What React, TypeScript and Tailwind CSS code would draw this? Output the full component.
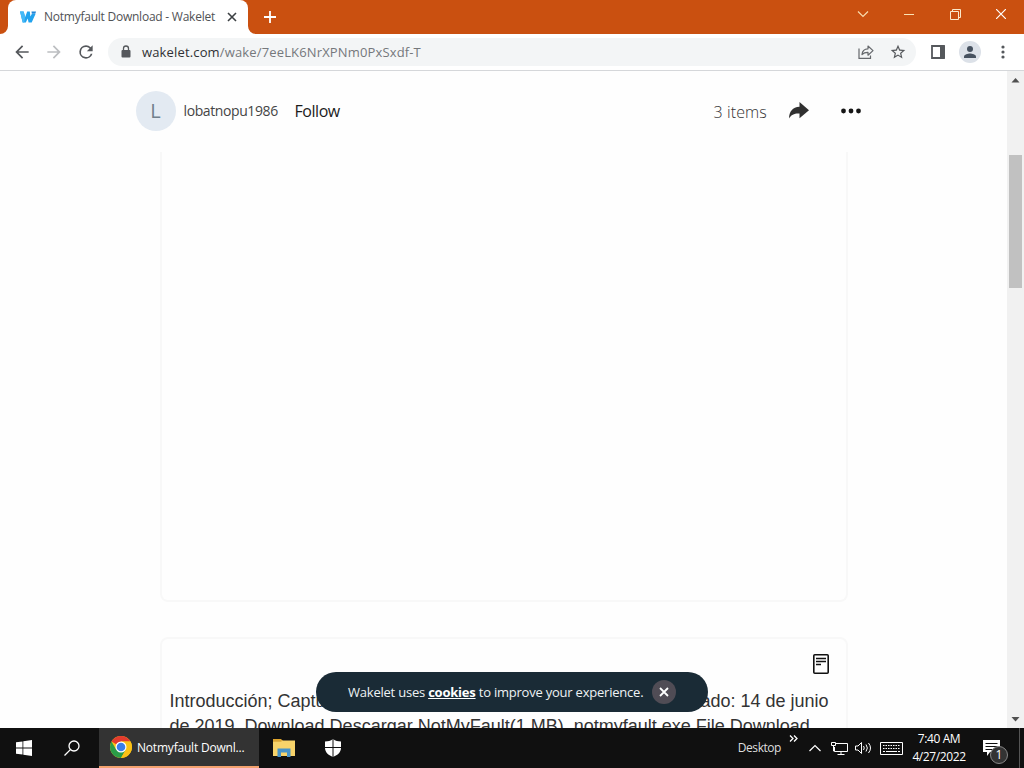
import { ReactNode } from "react";
import clsx from "clsx";

interface IconProps {
  className?: string;
}

const WakeletLogo = ({ className }: IconProps) => (
  <svg className={className} width="16" height="12" viewBox="0 0 16 12">
    <path d="M0 .5h3.600l1.600 5.500L7.200.5h2.600l.6 5 1.400-2.500h3.700L11.700 11.500H8.600L7.700 7.500 5.800 11.500H2.700z" fill="#22a3ee" />
    <path d="M11.500 .5H16l-.7 2.200h-3.500z" fill="#2186d8" />
    <path d="M0 .5h3.600l1.600 5.500-1 5.500H2.700z" fill="#45b9f7" />
  </svg>
);

const ChromeLogo = ({ className }: IconProps) => (
  <svg className={className} width="22" height="22" viewBox="0 0 24 24">
    <circle cx="12" cy="12" r="12" fill="#fbc116" />
    <path d="M12 12L1.610 6A12 12 0 0 1 22.390 6H12z" fill="#e33b2e" />
    <path d="M1.610 6A12 12 0 0 0 12 24l5.200-9L12 12 6.800 15z" fill="#2a9c48" />
    <path d="M12 24A12 12 0 0 0 22.390 6H12l5.200 9z" fill="#fbc116" />
    <circle cx="12" cy="12" r="6" fill="#fff" />
    <circle cx="12" cy="12" r="4.700" fill="#3b7de9" />
  </svg>
);

const TitleBar = () => (
  <div className="flex h-[34px] bg-[#ca5010] pl-2">
    <div className="relative flex h-full w-60 items-center rounded-t-lg bg-white pl-3 pr-[11px]">
      {/* Curved feet of the tab */}
      <svg className="absolute -left-2 bottom-0" width="8" height="8">
        <path d="M8 0v8H0a8 8 0 0 0 8-8z" fill="#fff" />
      </svg>
      <svg className="absolute -right-2 bottom-0" width="8" height="8">
        <path d="M0 0v8h8a8 8 0 0 1-8-8z" fill="#fff" />
      </svg>
      <WakeletLogo />
      <span className="ml-2 whitespace-nowrap text-xs tracking-[-0.24px] text-[#505255]">Notmyfault Download - Wakelet</span>
      <svg className="ml-auto" width="10" height="10" viewBox="0 0 10 10" stroke="#3c4043" strokeWidth="1.600">
        <path d="M1 1l8 8M9 1L1 9" />
      </svg>
    </div>
    <svg className="ml-4 mt-[11px]" width="12" height="12" stroke="#fff" strokeWidth="1.800">
      <path d="M6 0v12M0 6h12" />
    </svg>
    <div className="ml-auto flex">
      <div className="flex w-[46px] justify-center pt-[11px]">
        <svg width="12" height="7" fill="none" stroke="#f8dcae" strokeWidth="1.200">
          <path d="M1 .5l5 5 5-5" />
        </svg>
      </div>
      <div className="flex w-[46px] justify-center pt-3.5">
        <div className="h-px w-2.5 bg-[#fbe3b5]" />
      </div>
      <div className="flex w-[46px] justify-center pt-[9px]">
        <svg width="11" height="11" fill="none" stroke="#fbe9cb">
          <path d="M.5 2.500h8v8h-8zM2.500 2.500v-2h8v8h-2" />
        </svg>
      </div>
      <div className="flex w-[46px] justify-center pt-[9px]">
        <svg width="10" height="10" stroke="#fff" strokeWidth="1.200">
          <path d="M0 0l10 10M10 0L0 10" />
        </svg>
      </div>
    </div>
  </div>
);

const Toolbar = () => (
  <div className="flex h-[37px] items-center border-b border-[#d5d7da] bg-white pl-3">
    <svg width="20" height="20" viewBox="0 0 24 24" fill="#55585c">
      <path d="M20 11H7.830l5.590-5.590L12 4l-8 8 8 8 1.410-1.410L7.830 13H20v-2z" />
    </svg>
    <svg className="ml-3" width="20" height="20" viewBox="0 0 24 24" fill="#bcbec1">
      <path d="M12 4l-1.410 1.410L16.170 11H4v2h12.170l-5.580 5.590L12 20l8-8z" />
    </svg>
    <svg className="ml-3" width="20" height="20" viewBox="0 0 24 24" fill="#55585c">
      <path d="M17.650 6.350A7.960 7.960 0 0 0 12 4a8 8 0 1 0 7.730 10h-2.080A6 6 0 1 1 12 6c1.660 0 3.140.69 4.220 1.780L13 11h7V4l-2.350 2.350z" />
    </svg>
    <div className="ml-3 flex h-7 w-[808px] items-center rounded-full bg-[#f3f5f6] pl-3 pr-[10px]">
      <svg width="12" height="14" viewBox="0 0 12 14">
        <rect x="1.500" y="5" width="9" height="7.500" rx="1" fill="#55585c" />
        <path d="M3.500 5.500v-2a2.500 2.500 0 0 1 5 0v2" fill="none" stroke="#55585c" strokeWidth="1.300" />
      </svg>
      <p className="ml-[10px] mt-px whitespace-nowrap text-[13px] tracking-[0.15px] text-[#75787c]">
        <span className="text-[#303134]">wakelet.com</span>/wake/7eeLK6NrXPNm0PxSxdf-T
      </p>
      <svg className="ml-auto" width="16" height="16" viewBox="0 0 16 16" fill="none" stroke="#65686c" strokeWidth="1.200">
        <path d="M1 4.500v9.900h11.500v-3" />
        <path d="M4 10.500c.3-3.600 2.500-5.600 6-5.700V2l5 4.600-5 4.600V8.300C7.300 8.200 5.500 9 4 10.500z" strokeLinejoin="round" />
      </svg>
      <svg className="ml-4" width="16" height="16" viewBox="1 1 22 22" fill="#55585c">
        <path d="M22 9.240l-7.190-.62L12 2 9.190 8.630 2 9.240l5.460 4.730L5.820 21 12 17.270 18.180 21l-1.630-7.030L22 9.240zM12 15.400l-3.760 2.270 1-4.280-3.320-2.880 4.380-.38L12 6.100l1.710 4.040 4.380.38-3.320 2.880 1 4.280L12 15.400z" />
      </svg>
    </div>
    <svg className="ml-[14px]" width="16" height="14">
      <path d="M2 1h12v12H2z" fill="none" stroke="#55585c" strokeWidth="1.800" />
      <path d="M10 1h5v12h-5z" fill="#55585c" />
    </svg>
    <div className="ml-[13px] flex size-[22px] items-center justify-center rounded-full bg-[#dce1e8]">
      <svg width="12" height="12" fill="#46515f">
        <circle cx="6" cy="3" r="3" />
        <path d="M0 12v-1.500C0 8.500 4 7.500 6 7.500s6 1 6 3V12z" />
      </svg>
    </div>
    <svg className="ml-[20px]" width="4" height="14" fill="#55585c">
      <circle cx="2" cy="2" r="1.600" />
      <circle cx="2" cy="7" r="1.600" />
      <circle cx="2" cy="12" r="1.600" />
    </svg>
  </div>
);

const WakeHeader = () => (
  <div className="mx-auto mb-0.5 flex h-[79px] w-[736px] items-center whitespace-nowrap">
    <div className="flex size-10 items-center justify-center rounded-full bg-[#e3eaf2] text-xl text-[#71808c]">L</div>
    <div className="ml-2 w-[111px] text-sm tracking-[-0.4px] text-[#454545]">lobatnopu1986</div>
    <span className="text-base tracking-[-0.45px] text-[#1b1b1b]">Follow</span>
    <div className="ml-auto mt-0.5 w-[52px] text-base font-light tracking-[0.1px] text-[#333]">3 items</div>
    <svg className="ml-[22px]" width="22" height="18" viewBox="0 0 22 18" fill="#303030">
      <path d="M11.500 0L21 8.200l-9.500 8v-4.700C6.500 11.200 3.500 12.500 1 16.500 1.200 9.500 4.500 5 11.500 4.700z" />
    </svg>
    <svg className="ml-[31px] mr-[11px]" width="20" height="6" fill="#161616">
      <circle cx="2.500" cy="3" r="2.400" />
      <circle cx="10" cy="3" r="2.400" />
      <circle cx="17.500" cy="3" r="2.400" />
    </svg>
  </div>
);

const CookieBanner = () => (
  <div className="absolute bottom-4 left-[316px] flex h-10 w-[392px] items-center rounded-full bg-[#1a2b36] pl-8 text-[13px] text-[#eef2f4]">
    <p className="mt-px whitespace-nowrap tracking-[-0.22px]">
      Wakelet uses <span className="font-bold text-white underline">cookies</span> to improve your experience.
    </p>
    <div className="absolute left-[336px] flex size-6 items-center justify-center rounded-full bg-[#504c55]">
      <svg width="10" height="10" stroke="#fff" strokeWidth="1.800">
        <path d="M1 1l8 8M9 1L1 9" />
      </svg>
    </div>
  </div>
);

const Page = () => (
  <div className="relative h-full w-[1007px] overflow-hidden bg-[#fefefe]">
    <WakeHeader />
    <div className="mx-auto h-[450px] w-[688px] rounded-b-lg border-x-2 border-b-2 border-[#f8f8f8]" />
    <div className="mx-auto mt-[35px] h-[120px] w-[688px] rounded-t-lg border-2 border-[#f8f8f8] px-2">
      <div className="flex h-[50px] justify-end pr-2 pt-[14px]">
        <svg width="18" height="22" fill="none" stroke="#111" strokeWidth="1.600">
          <rect x="1.800" y="1.800" width="14.400" height="18.400" rx="1" />
          <path d="M4 5.500h10M4 8.500h10M4 11.500h5" />
        </svg>
      </div>
      <div className="whitespace-nowrap font-['Liberation_Sans',Arial,sans-serif] text-lg leading-[25px] text-[#333]">
        <div className="flex justify-between pr-[9px]">
          <span>Introducción; Captura</span>
          <span>Publicado: 14 de junio</span>
        </div>
        <p>de 2019. Download Descargar NotMyFault(1 MB). notmyfault.exe File Download</p>
      </div>
    </div>
    <CookieBanner />
  </div>
);

const Scrollbar = () => (
  <div className="flex w-[17px] flex-col items-center bg-[#f1f1f1]">
    <svg width="17" height="17" fill="#505050">
      <path d="M4.500 11.500h8L8.500 7z" />
    </svg>
    <div className="mt-[67px] h-[133px] w-[13px] bg-[#c1c1c1]" />
    <svg className="mt-auto" width="17" height="17" fill="#505050">
      <path d="M4.500 6h8l-4 4.500z" />
    </svg>
  </div>
);

const TaskButton = ({ children, active }: { children: ReactNode; active?: boolean }) => (
  <div
    className={clsx("flex h-full items-center", {
      "w-40 border-b-2 border-[#f3a16e] bg-[#333] pl-[11px]": active,
      "w-12 justify-center": !active,
    })}
  >
    {children}
  </div>
);

const Taskbar = () => (
  <div className="flex h-10 items-center bg-[#101010] text-xs text-white">
    <TaskButton>
      <svg width="16" height="16" viewBox="0 0 16 16" fill="#fff">
        <path d="M0 2.300L6.500 1.400v6.200H0zM7.300 1.300L16 0v7.600H7.300zM0 8.400h6.500v6.200L0 13.700zM7.300 8.400H16V16l-8.700-1.300z" />
      </svg>
    </TaskButton>
    <TaskButton>
      <svg width="16" height="16" fill="none" stroke="#fff" strokeWidth="1.300">
        <circle cx="10" cy="6" r="5" />
        <path d="M6.400 9.600L.5 15.500" />
      </svg>
    </TaskButton>
    <div className="w-[3px]" />
    <TaskButton active>
      <ChromeLogo />
      <span className="ml-[5px] mt-px whitespace-nowrap tracking-[-0.2px]">Notmyfault Downl...</span>
    </TaskButton>
    <div className="w-px" />
    <TaskButton>
      <svg width="22" height="18" viewBox="0 0 22 18">
        <path d="M0 0h8l2 2H0z" fill="#e0a52c" />
        <path d="M0 1.500h22V17H0z" fill="#f7d36a" />
        <path d="M0 2h8.500" stroke="#c98f1f" />
        <path d="M4.500 18V9.500h13V18H14v-4.500H8V18z" fill="#4793c8" />
      </svg>
    </TaskButton>
    <div className="w-px" />
    <TaskButton>
      <svg width="16" height="18" viewBox="0 0 16 18">
        <path d="M8 0c2.500 1.800 5 2.500 8 2.500V9c0 4.500-4 7.500-8 9-4-1.500-8-4.500-8-9V2.500C3 2.500 5.500 1.800 8 0z" fill="#fff" />
        <path d="M8 0v18M0 8.500h16" stroke="#101010" />
      </svg>
    </TaskButton>
    <div className="ml-auto flex h-full items-center">
      <span className="tracking-[-0.45px] text-[#dedede]">Desktop</span>
      <svg className="mb-5 ml-2" width="9" height="7" fill="none" stroke="#fff" strokeWidth="1.300">
        <path d="M1 .5l3 3-3 3M5 .5l3 3-3 3" />
      </svg>
      <svg className="ml-[11px]" width="12" height="8" fill="none" stroke="#fff" strokeWidth="1.200">
        <path d="M.5 7L6 1.500 11.500 7" />
      </svg>
      <svg className="ml-[10px]" width="17" height="15" fill="none" stroke="#fff">
        <path d="M5 2.500h11.500v8H3.500V6M10 10.500v3M6.500 13.500h7M.5 1.500h4v3h-4zM2.500 4.500v5.500h1" />
      </svg>
      <svg className="ml-[7px]" width="18" height="14" fill="none" stroke="#fff">
        <path d="M.5 5v4h2.500l3.500 3.500v-11L3 5zM8.500 5q1.500 2 0 4M11 3.500q2.700 3.500 0 7M13.500 2q4 5 0 10" />
      </svg>
      <svg className="ml-[7px]" width="23" height="13" fill="none" stroke="#fff">
        <path d="M.5.500h22v12H.5z" />
        <path d="M3 3.500h17M3 6.500h17" strokeDasharray="1.500 1" />
        <path d="M3 9.500h2M6 9.500h11M18 9.500h2" />
      </svg>
      <div className="ml-[9px] w-[54px] whitespace-nowrap text-center leading-[18px] tracking-[-0.4px]">
        <p>7:40 AM</p>
        <p>4/27/2022</p>
      </div>
      <div className="relative ml-[17px] h-full w-[36px]">
        <svg className="absolute left-0 top-3" width="17" height="16">
          <path d="M0 0h17v12H7l-3 4v-4H0z" fill="#fff" />
          <path d="M2.500 3.500h12M2.500 6.500h12M2.500 9.500h8" stroke="#101010" />
        </svg>
        <span className="absolute left-[7px] top-[18px] flex size-[18px] items-center justify-center rounded-full border border-[#888] bg-[#333] text-xs">1</span>
      </div>
      <div className="mr-1 h-full w-px bg-[#555]" />
    </div>
  </div>
);

export default function App() {
  return (
    <div className="flex h-[768px] w-[1024px] flex-col overflow-hidden font-['Open_Sans','Noto_Sans',sans-serif]">
      <TitleBar />
      <Toolbar />
      <div className="flex min-h-0 flex-1">
        <Page />
        <Scrollbar />
      </div>
      <Taskbar />
    </div>
  );
}
